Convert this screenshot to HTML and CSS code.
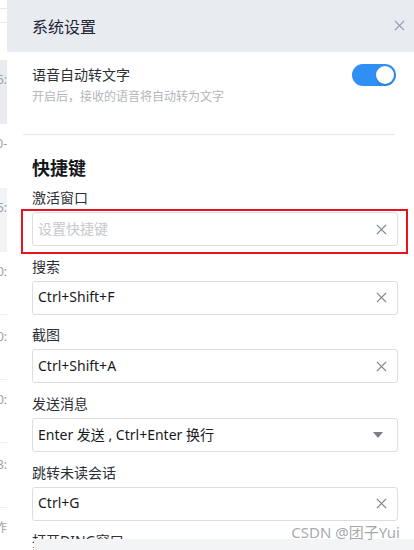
FILE: index.html
```html
<!DOCTYPE html>
<html lang="zh-CN">
<head>
<meta charset="utf-8">
<title>系统设置</title>
<link rel="stylesheet" href="styles.css">
</head>
<body>
<div class="page">
  <aside class="bg-list">
    <div class="bg-top"><div class="bg-line"></div></div>
    <div class="bg-item shade">15:</div>
    <div class="bg-item">10-</div>
    <div class="bg-item light">15:</div>
    <div class="bg-item lined">10:</div>
    <div class="bg-item lined tall">10:</div>
    <div class="bg-item lined">10:</div>
    <div class="bg-item lined tall">13:</div>
    <div class="bg-item">昨</div>
  </aside>

  <section class="drawer">
    <header class="drawer-head">
      <span class="drawer-title">系统设置</span>
      <svg class="close-icon" viewBox="0 0 12 12" width="12" height="12"><path d="M1 1 L11 11 M11 1 L1 11" /></svg>
    </header>

    <div class="drawer-body">
      <div class="setting-row">
        <div class="setting-text">
          <div class="setting-name">语音自动转文字</div>
          <div class="setting-desc">开启后，接收的语音将自动转为文字</div>
        </div>
        <span class="switch"><span class="knob"></span></span>
      </div>

      <div class="divider"></div>

      <h3 class="section-title">快捷键</h3>

      <div class="field">
        <div class="field-label">激活窗口</div>
        <div class="input">
          <span class="placeholder">设置快捷键</span>
          <svg class="clear-icon" viewBox="0 0 12 12" width="11" height="11"><path d="M1 1 L11 11 M11 1 L1 11" /></svg>
        </div>
        <span class="annotation"></span>
      </div>

      <div class="field">
        <div class="field-label">搜索</div>
        <div class="input">
          <span class="value">Ctrl+Shift+F</span>
          <svg class="clear-icon" viewBox="0 0 12 12" width="11" height="11"><path d="M1 1 L11 11 M11 1 L1 11" /></svg>
        </div>
      </div>

      <div class="field">
        <div class="field-label">截图</div>
        <div class="input">
          <span class="value">Ctrl+Shift+A</span>
          <svg class="clear-icon" viewBox="0 0 12 12" width="11" height="11"><path d="M1 1 L11 11 M11 1 L1 11" /></svg>
        </div>
      </div>

      <div class="field">
        <div class="field-label">发送消息</div>
        <div class="input select">
          <span class="value">Enter 发送 , Ctrl+Enter 换行</span>
          <svg class="arrow-icon" viewBox="0 0 10 6" width="10" height="6"><path d="M0 0 H10 L5 6 Z" /></svg>
        </div>
      </div>

      <div class="field">
        <div class="field-label">跳转未读会话</div>
        <div class="input">
          <span class="value">Ctrl+G</span>
          <svg class="clear-icon" viewBox="0 0 12 12" width="11" height="11"><path d="M1 1 L11 11 M11 1 L1 11" /></svg>
        </div>
      </div>

      <div class="field">
        <div class="field-label">打开DING窗口</div>
      </div>
    </div>

    <div class="footer-bar"></div>
    <div class="watermark">CSDN @团子Yui</div>
  </section>
</div>
</body>
</html>
```

FILE: styles.css
```css
* { box-sizing: border-box; }

html, body {
  margin: 0;
  padding: 0;
  background: #fff;
}

body {
  font-family: "Noto Sans", "Noto Sans CJK SC", sans-serif;
  color: #17233d;
}

.page {
  width: 414px;
  height: 550px;
  display: flex;
  overflow: hidden;
}

/* background page peeking out on the left */
.bg-list {
  width: 7px;
  flex: none;
  display: flex;
  flex-direction: column;
  overflow: hidden;
}

.bg-top {
  height: 60px;
  flex: none;
  border-top: 1px solid transparent;
}

.bg-line {
  margin-top: 7px;
  height: 15px;
  border-top: 1px solid #e6e8eb;
  border-bottom: 1px solid #e6e8eb;
}

.bg-item {
  height: 64px;
  flex: none;
  padding-top: 13px;
  font-size: 12px;
  line-height: 14px;
  color: #9a9ea6;
  white-space: nowrap;
  display: flex;
  justify-content: flex-end;
}

.bg-item.shade { background: #e9ebef; }
.bg-item.light { background: #f2f3f5; }
.bg-item.lined { height: 63px; border-bottom: 1px solid #eceef1; }
.bg-item.tall { height: 65px; padding-top: 15px; }

/* drawer */
.drawer {
  position: relative;
  flex: 1;
  display: flex;
  flex-direction: column;
  background: #fff;
  overflow: hidden;
}

.drawer-head {
  height: 52px;
  flex: none;
  background: #e8ebf0;
  display: flex;
  align-items: center;
  justify-content: space-between;
  padding: 0 9px 0 25px;
}

.drawer-title {
  font-size: 16px;
  color: #1c2438;
  line-height: 22px;
  padding-top: 1px;
}

.close-icon {
  width: 11px;
  height: 11px;
  fill: none;
  stroke: #8d9aab;
  stroke-width: 1.3;
  margin-bottom: 2px;
}

.drawer-body {
  padding: 12px 16px 0 25px;
  display: flex;
  flex-direction: column;
}

.setting-row {
  display: flex;
  justify-content: space-between;
  align-items: flex-start;
}

.setting-name {
  font-size: 14px;
  line-height: 22px;
  color: #2b2f36;
}

.setting-desc {
  margin-top: 1px;
  font-size: 12px;
  line-height: 20px;
  color: #b3b6bc;
}

.switch {
  position: relative;
  width: 44px;
  height: 22px;
  margin-right: 2px;
  border-radius: 11px;
  background: #2f8ff3;
  display: flex;
  justify-content: flex-end;
  align-items: center;
  padding-right: 2px;
}

.knob {
  width: 18px;
  height: 18px;
  border-radius: 50%;
  background: #fff;
  box-shadow: 0 1px 2px rgba(0, 0, 0, 0.2);
}

.divider {
  margin: 27px 3px 0 -9px;
  height: 1px;
  background: #e6e8eb;
}

.section-title {
  margin: 20px 0 6px;
  font-size: 18px;
  line-height: 26px;
  font-weight: 700;
  color: #17181c;
}

.field {
  position: relative;
  margin-bottom: 9.7px;
}

.field-label {
  font-size: 14px;
  line-height: 22px;
  color: #2b2f36;
  margin-bottom: 3px;
}

.input {
  height: 34px;
  border: 1px solid #dcdee2;
  border-radius: 3px;
  display: flex;
  align-items: center;
  justify-content: space-between;
  padding: 0 10px 2px 5px;
  font-size: 14px;
}

.input.select { padding-right: 14px; }

.value { color: #17181c; }

.placeholder { color: #c5c8ce; }

.clear-icon {
  fill: none;
  stroke: #7d8590;
  stroke-width: 1.4;
  margin-top: 2px;
}

.arrow-icon {
  fill: #7a7f88;
  margin-top: 2px;
}

/* red annotation frame drawn over the first field */
.annotation {
  position: absolute;
  left: -11px;
  right: -10px;
  top: 22px;
  height: 45px;
  border: 2px solid #e8141c;
  pointer-events: none;
}

.footer-bar {
  position: absolute;
  left: 27px;
  right: 0;
  top: 539px;
  bottom: 0;
  background: #f3f4f6;
}

.watermark {
  position: absolute;
  right: 14px;
  top: 522px;
  font-size: 15px;
  line-height: 20px;
  color: rgba(150, 152, 156, 0.85);
  white-space: nowrap;
}
```
